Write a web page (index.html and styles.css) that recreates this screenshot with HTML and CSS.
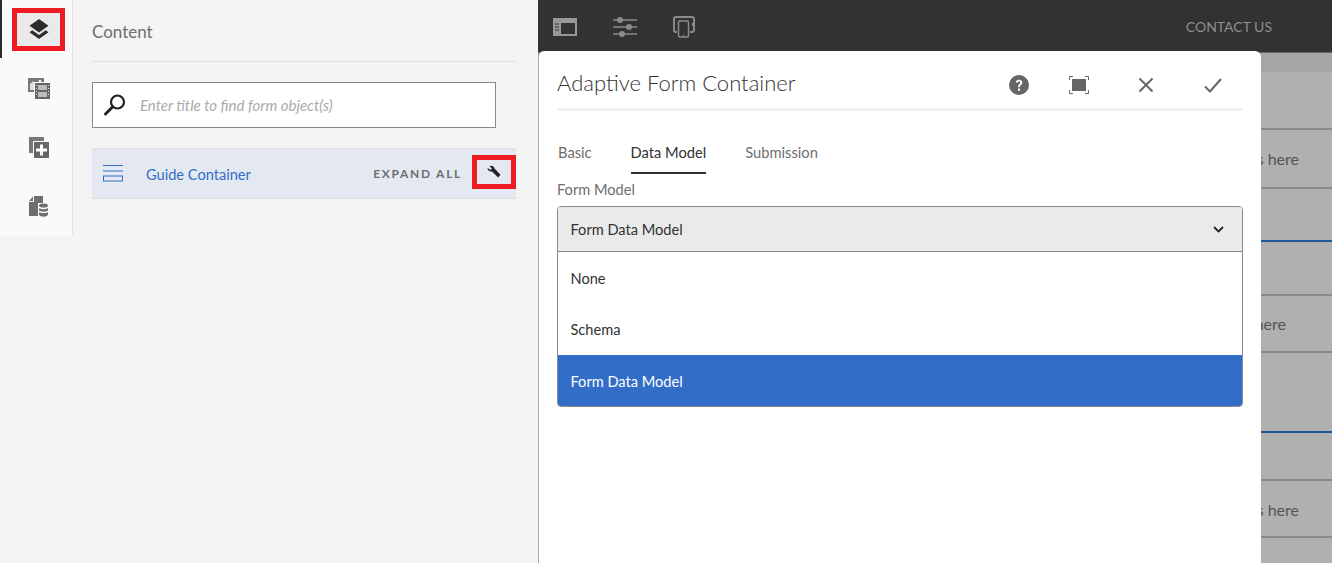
FILE: index.html
```html
<!DOCTYPE html>
<html lang="en">
<head>
    <meta charset="UTF-8">
    <meta name="viewport" content="width=device-width, initial-scale=1.0">
    <title>Adaptive Form Container</title>
    <link rel="stylesheet" href="styles.css">
</head>
<body>
    <div class="page">
        <aside class="sidebar">
            <nav class="rail">
                <div class="rail-tab rail-tab-active">
                    <span class="rail-mark">
                        <svg width="22" height="22" viewBox="0 0 22 22"><path d="M11 1l9.500 6.800L11 14.500 1.500 7.800z" fill="#2c2c2c"/><path d="M4.300 12.300L1.500 14.300 11 21l9.500-6.700-2.800-2L11 17z" fill="#2c2c2c"/></svg>
                    </span>
                </div>
                <div class="rail-tab">
                    <svg width="22" height="21" viewBox="0 0 22 21"><rect width="16" height="14" fill="#777"/><path d="M2 12V6l3-3 3 3 3-1v7z" fill="#ddd"/><circle cx="12" cy="3" r="1.300" fill="#fff"/><rect x="6" y="4" width="16" height="17" fill="#fafafa"/><rect x="7" y="5" width="15" height="16" fill="#666"/><path d="M10 7h9v5h-9zM10 14h9v5h-9z" fill="#bbb"/><path d="M8 7h1v1H8zM8 10h1v1H8zM8 13h1v1H8zM8 16h1v1H8zM20 7h1v1h-1zM20 10h1v1h-1zM20 13h1v1h-1zM20 16h1v1h-1z" fill="#ddd"/></svg>
                </div>
                <div class="rail-tab">
                    <svg width="20" height="21" viewBox="0 0 20 21"><rect width="15" height="16" fill="#777"/><rect x="4" y="4" width="16" height="17" fill="#fafafa"/><rect x="5" y="5" width="15" height="16" fill="#666"/><path d="M11 7.500h3v4h4v3h-4v4h-3v-4H7v-3h4z" fill="#fff"/></svg>
                </div>
                <div class="rail-tab">
                    <svg width="19" height="21" viewBox="0 0 19 21"><path d="M5 0h9v20H0V6h5z" fill="#6e6e6e"/><path d="M4 0.500v4.500H0z" fill="#6e6e6e"/><rect x="9" y="7" width="10" height="14" fill="#fafafa"/><ellipse cx="14.500" cy="9.500" rx="4.500" ry="2" fill="#6e6e6e"/><path d="M10 12c1 1.500 8 1.500 9 0v2.500c-1 1.500-8 1.500-9 0zM10 16c1 1.500 8 1.500 9 0v2.500c-1 3-8 3-9 0z" fill="#6e6e6e"/></svg>
                </div>
            </nav>
            <section class="panel">
                <h2 class="panel-title">Content</h2>
                <div class="search-box">
                    <svg width="24" height="24" viewBox="0 0 24 24"><circle cx="14.500" cy="9" r="6.500" fill="none" stroke="#222" stroke-width="2.200"/><path d="M9.500 14L2.500 21" stroke="#222" stroke-width="3" stroke-linecap="round"/></svg>
                    <span class="search-hint">Enter title to find form object(s)</span>
                </div>
                <div class="tree-row">
                    <svg class="tree-icon" width="20" height="17" viewBox="0 0 20 17"><path d="M0 .5h20M0 6h20" stroke="#326ec8" fill="none"/><rect x=".5" y="11" width="19" height="5" fill="none" stroke="#326ec8"/></svg>
                    <span class="tree-name">Guide Container</span>
                    <span class="expand-all">EXPAND ALL</span>
                    <span class="wrench-mark">
                        <svg width="14" height="14" viewBox="0 0 14 14"><path d="M.6 2.800L3.200 5 5 3.500 2.500 1.200C4.500 0 7 .8 7.500 3.500L13.500 9.800 11.200 12.500 5 6.500C2.500 7 .2 5 .6 2.800z" fill="#222"/></svg>
                    </span>
                </div>
            </section>
        </aside>

        <main class="editor">
            <header class="toolbar">
                <svg width="24" height="18" viewBox="0 0 24 18"><path d="M0 0h24v18H0z" fill="#999"/><path d="M8 5h14v11H8z" fill="#323232"/><path d="M2 6h4M2 9h4M2 12h4" stroke="#323232"/></svg>
                <svg width="24" height="22" viewBox="0 0 24 22"><path d="M0 4h24M0 11h24M0 18h24" stroke="#8a8a8a" stroke-width="1.500"/><circle cx="7" cy="4" r="3" fill="#8a8a8a"/><circle cx="16" cy="11" r="3" fill="#8a8a8a"/><circle cx="9" cy="18" r="3" fill="#8a8a8a"/></svg>
                <svg width="22" height="22" viewBox="0 0 22 22"><rect x="1" y="1" width="20" height="15" rx="2" fill="none" stroke="#8a8a8a" stroke-width="2"/><rect x="4" y="4" width="13" height="18" rx="2" fill="#323232"/><rect x="5.500" y="5" width="10" height="16" rx="1.500" fill="none" stroke="#8a8a8a" stroke-width="1.500"/><rect x="19" y="7" width="2" height="3" fill="#8a8a8a"/><circle cx="10.500" cy="19.500" r=".8" fill="#8a8a8a"/></svg>
                <span class="contact">CONTACT US</span>
            </header>
            <div class="canvas">
                <div class="canvas-band"></div>
                <div class="canvas-row row-58"></div>
                <div class="canvas-row row-59"><span class="row-text">Drag components here</span></div>
                <div class="canvas-row row-blue row-53"></div>
                <div class="canvas-row row-54"></div>
                <div class="canvas-row row-57"><span class="row-text row-text-b">Drag components here</span></div>
                <div class="canvas-row row-blue row-80"></div>
                <div class="canvas-row row-48"></div>
                <div class="canvas-row row-57"><span class="row-text row-text-c">Drag components here</span></div>
            </div>

            <div class="dialog">
                <div class="dialog-head">
                    <h1 class="dialog-title">Adaptive Form Container</h1>
                    <div class="dialog-actions">
                        <svg class="action-help" width="20" height="20" viewBox="0 0 20 20"><circle cx="10" cy="10" r="10" fill="#666"/><path d="M6.800 7.500C7 3.700 13.400 3.800 13.400 7.500c0 2.500-2.500 2.300-2.500 4.700H9c0-3.200 2.300-3 2.300-4.700 0-1.500-2.300-1.500-2.500 0z" fill="#fff"/><rect x="9" y="13.500" width="2" height="2.300" fill="#fff"/></svg>
                        <svg width="20" height="18" viewBox="0 0 20 18"><path d="M.5 4V.5H4M16 .5h3.500V4M19.500 14v3.500H16M4 17.500H.5V14" fill="none" stroke="#666"/><rect x="3" y="3" width="14" height="12" fill="#666"/></svg>
                        <svg class="action-close" width="16" height="16" viewBox="0 0 16 16"><path d="M1.500 1.500l13 13M14.500 1.500l-13 13" stroke="#666" stroke-width="2"/></svg>
                        <svg width="18" height="15" viewBox="0 0 18 15"><path d="M1 8.500l5 5L17 1" fill="none" stroke="#666" stroke-width="2"/></svg>
                    </div>
                </div>
                <div class="tabs">
                    <span class="tab">Basic</span>
                    <span class="tab tab-active">Data Model</span>
                    <span class="tab">Submission</span>
                </div>
                <label class="field-label">Form Model</label>
                <div class="select">
                    <div class="select-button">
                        <span>Form Data Model</span>
                        <svg width="11" height="7" viewBox="0 0 11 7"><path d="M1 1l4.500 4.500L10 1" fill="none" stroke="#222" stroke-width="1.800"/></svg>
                    </div>
                    <div class="select-option select-option-first">None</div>
                    <div class="select-option">Schema</div>
                    <div class="select-option select-option-on">Form Data Model</div>
                </div>
            </div>
        </main>
    </div>
</body>
</html>
```

FILE: styles.css
```css
html, body {
    margin: 0;
    height: 100%;
    overflow: hidden;
}

body {
    font-family: 'Lato', 'Open Sans', sans-serif;
    background-color: #f4f4f4;
}

svg {
    display: block;
    flex-shrink: 0;
}

.page {
    display: flex;
    height: 563px;
}

.sidebar {
    display: flex;
    align-items: flex-start;
    width: 538px;
    flex-shrink: 0;
    background-color: #f4f4f4;
}

/* left icon rail */
.rail {
    width: 73px;
    height: 236px;
    flex-shrink: 0;
    box-sizing: border-box;
    background-color: #fafafa;
    border-right: 1px solid #e4e4e4;
}

.rail-tab {
    height: 59px;
    display: flex;
    align-items: center;
    justify-content: center;
    padding-left: 5px;
    box-sizing: border-box;
}

.rail-tab-active {
    padding-left: 10px;
    justify-content: flex-start;
    border-left: 2px solid #2c2c2c;
    height: 58px;
    margin-bottom: 1px;
}

.rail-mark {
    width: 53px;
    height: 43px;
    box-sizing: border-box;
    border: 5px solid #ed1c24;
    background-color: #eaeaea;
    display: flex;
    align-items: center;
    justify-content: center;
}

/* content panel */
.panel {
    flex: 1;
    padding: 0 22px 0 19px;
}

.panel-title {
    margin: 0;
    height: 62px;
    box-sizing: border-box;
    padding-top: 21px;
    font-size: 17px;
    line-height: 22px;
    font-weight: 400;
    color: #6e6e6e;
    border-bottom: 1px solid #e2e2e2;
}

.search-box {
    margin-top: 20px;
    width: 404px;
    height: 46px;
    box-sizing: border-box;
    background-color: #fff;
    border: 1px solid #8a8a8a;
    display: flex;
    align-items: center;
    padding-left: 10px;
    gap: 13px;
}

.search-hint {
    font-size: 15px;
    font-style: italic;
    color: #aaa;
}

.tree-row {
    margin-top: 20px;
    height: 51px;
    box-sizing: border-box;
    background-color: #e4e9f1;
    border-top: 1px solid #dedede;
    border-bottom: 1px solid #dedede;
    display: flex;
    align-items: center;
    padding-left: 11px;
}

.tree-name {
    margin-left: 23px;
    margin-top: 2px;
    font-size: 14.600px;
    color: #326ec8;
}

.expand-all {
    margin-left: auto;
    font-size: 12px;
    font-weight: 700;
    letter-spacing: 1.700px;
    color: #6e6e6e;
}

.wrench-mark {
    width: 44px;
    height: 34px;
    box-sizing: border-box;
    border: 5px solid #ed1c24;
    margin-left: 10px;
    margin-top: -3px;
    display: flex;
    align-items: center;
    justify-content: center;
}

/* right side */
.editor {
    flex: 1;
    position: relative;
    overflow: hidden;
    background-color: #b0b0b0;
}

.toolbar {
    height: 53px;
    box-sizing: border-box;
    background-color: #323232;
    border-bottom: 1px solid #666;
    display: flex;
    align-items: center;
    padding: 2px 60px 0 15px;
    gap: 36px;
}

.contact {
    margin-left: auto;
    margin-top: -2px;
    font-size: 14px;
    color: #8f8f8f;
}

.canvas-band {
    height: 19px;
    background-color: #a5a5a5;
}

.canvas-row {
    box-sizing: border-box;
    border-bottom: 2px solid #8a8a8a;
    display: flex;
    align-items: center;
    justify-content: flex-end;
    padding-right: 33px;
}

.row-48 { height: 48px; }
.row-53 { height: 53px; }
.row-54 { height: 54px; }
.row-57 { height: 57px; }
.row-58 { height: 58px; }
.row-59 { height: 59px; }
.row-80 { height: 80px; }

.row-blue {
    border-bottom-color: #1f5a96;
}

.row-text {
    font-size: 16px;
    color: #555;
    white-space: nowrap;
}

.row-text-b {
    padding-right: 13px;
}

.row-text-c {
    margin-top: 2px;
}

/* dialog sits over the page */
.dialog {
    position: absolute;
    left: 0;
    top: 51px;
    bottom: 0;
    width: 723px;
    box-sizing: border-box;
    padding: 0 18px 0 18px;
    background-color: #fff;
    border-left: 1px solid #aaa;
    border-radius: 6px 6px 0 0;
}

.dialog-head {
    height: 60px;
    box-sizing: border-box;
    border-bottom: 3px solid #f0f0f0;
    display: flex;
    align-items: center;
    padding-top: 11px;
}

.dialog-title {
    margin: -5px 0 0 0;
    font-size: 22px;
    font-weight: 300;
    color: #333;
}

.dialog-actions {
    margin-left: auto;
    display: flex;
    align-items: center;
    gap: 49px;
    padding-right: 21px;
}

.action-help {
    margin-right: -9px;
}

.action-close {
    margin-right: 1px;
}

.tabs {
    display: flex;
    gap: 39px;
    margin-top: 29px;
    margin-left: 1px;
    height: 34px;
}

.tab {
    font-size: 14.700px;
    line-height: 24px;
    color: #6e6e6e;
}

.tab-active {
    color: #323232;
    border-bottom: 2px solid #323232;
    box-sizing: border-box;
}

.field-label {
    display: block;
    margin-top: 6px;
    font-size: 14.600px;
    line-height: 20px;
    color: #6e6e6e;
}

.select {
    margin-top: 6px;
    border: 1px solid #8a8a8a;
    border-radius: 4px;
    overflow: hidden;
    font-size: 14.600px;
    color: #323232;
}

.select-button {
    height: 45px;
    box-sizing: border-box;
    background-color: #eaeaea;
    border-bottom: 1px solid #8a8a8a;
    display: flex;
    align-items: center;
    justify-content: space-between;
    padding: 0 18px 0 12.500px;
}

.select-option {
    height: 51px;
    display: flex;
    align-items: center;
    padding-left: 12.500px;
    background-color: #fff;
}

.select-option-first {
    height: 52px;
    box-sizing: border-box;
}

.select-option-on {
    background-color: #326ec8;
    color: #fff;
    padding-top: 1px;
    box-sizing: border-box;
}
```
